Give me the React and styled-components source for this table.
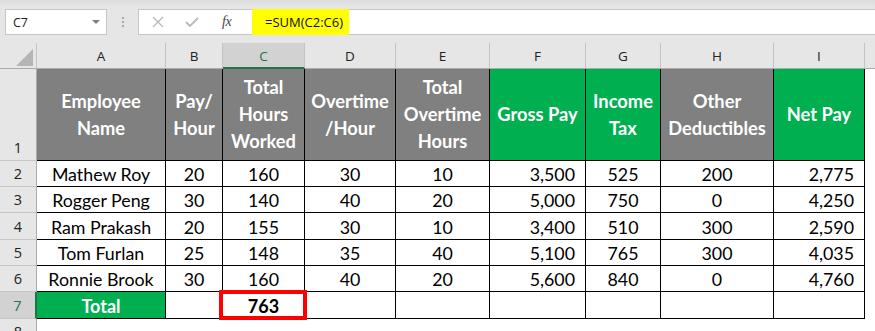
import React from 'react';
import styled, { createGlobalStyle } from 'styled-components';

const GlobalStyle = createGlobalStyle`
  html, body {
    margin: 0;
    padding: 0;
    background: #ffffff;
  }
  body {
    font-family: Lato, "Open Sans", sans-serif;
  }
`;

const Page = styled.div`
  width: 875px;
  height: 331px;
  overflow: hidden;
  background: #ffffff;
`;

const FormulaBar = styled.div`
  height: 43px;
  box-sizing: border-box;
  padding-top: 9px;
  display: flex;
  align-items: flex-start;
  background: linear-gradient(#dcdcdc, #e6e6e6 7px, #e6e6e6);
  font-family: "Open Sans", sans-serif;
`;

const NameBox = styled.div`
  margin-left: 5px;
  width: 102px;
  height: 26px;
  box-sizing: border-box;
  border: 1px solid #c6c6c6;
  background: #ffffff;
  display: flex;
  align-items: center;
  justify-content: space-between;
  padding: 0 6px 0 7px;
  font-size: 12.5px;
  color: #222;
`;

const DropArrow = styled.span`
  width: 0;
  height: 0;
  border-left: 4px solid transparent;
  border-right: 4px solid transparent;
  border-top: 4px solid #7f7f7f;
`;

const Grip = styled.div`
  width: 31px;
  height: 26px;
  display: flex;
  flex-direction: column;
  align-items: center;
  justify-content: center;
  gap: 2px;

  span {
    width: 2px;
    height: 2px;
    background: #a9a9a9;
  }
`;

const FxBox = styled.div`
  width: 114px;
  height: 26px;
  box-sizing: border-box;
  border: 1px solid #c6c6c6;
  border-right: none;
  background: #ffffff;
  display: flex;
  align-items: center;
  padding-left: 13px;
`;

const FxButton = styled.span`
  width: ${(p) => p.$w}px;
  display: flex;
  align-items: center;
`;

const FxLabel = styled.span`
  font-family: "Liberation Serif", serif;
  font-style: italic;
  font-size: 14px;
  color: #444;
  letter-spacing: -0.5px;
`;

const FormulaInput = styled.div`
  flex: 1;
  height: 26px;
  box-sizing: border-box;
  border-top: 1px solid #c6c6c6;
  border-bottom: 1px solid #c6c6c6;
  background: #ffffff;
  display: flex;
`;

const Highlight = styled.span`
  margin: -1px 0;
  width: 97px;
  box-sizing: border-box;
  padding-left: 13px;
  background: #ffff00;
  display: flex;
  align-items: center;
  font-size: 13px;
  color: #111;
`;

const Sheet = styled.div`
  display: grid;
  grid-template-columns: 37px 129px 57px 82px 91px 94px 96px 75px 113px 91px 1fr;
  grid-template-rows: 26px 92px 26px 26px 27px 26px 26px 27px 26px;
`;

const Corner = styled.div`
  background: #e6e6e6;
  border-bottom: 1px solid #ababab;
  border-right: 1px solid #c6c6c6;
  box-sizing: border-box;
  display: flex;
  align-items: flex-end;
  justify-content: flex-end;
  padding: 0 3px 2px 0;

  svg {
    display: block;
  }
`;

const ColHead = styled.div`
  box-sizing: border-box;
  background: ${(p) => (p.$active ? '#d2d2d2' : '#e6e6e6')};
  border-right: 1px solid #c3c3c3;
  border-bottom: ${(p) => (p.$active ? '2px solid #217346' : '1px solid #ababab')};
  display: flex;
  align-items: center;
  justify-content: center;
  padding-top: ${(p) => (p.$active ? '1px' : '0')};
  font-family: "Open Sans", sans-serif;
  font-size: 13.5px;
  color: ${(p) => (p.$active ? '#217346' : '#222')};
`;

const RowHead = styled.div`
  box-sizing: border-box;
  background: ${(p) => (p.$active ? '#d2d2d2' : '#e6e6e6')};
  border-right: ${(p) => (p.$active ? '2px solid #217346' : '1px solid #ababab')};
  border-bottom: 1px solid #c6c6c6;
  display: flex;
  align-items: ${(p) => (p.$bottom ? 'flex-end' : 'center')};
  justify-content: center;
  padding-bottom: ${(p) => (p.$bottom ? '3px' : '0')};
  font-family: "Open Sans", sans-serif;
  font-size: 14.5px;
  color: ${(p) => (p.$active ? '#217346' : '#222')};
`;

const TitleCell = styled.div`
  box-sizing: border-box;
  background: ${(p) => (p.$green ? '#00b050' : '#808080')};
  border-right: 1px solid #000;
  border-bottom: 1px solid #000;
  display: flex;
  align-items: center;
  justify-content: center;
  text-align: center;
  color: #ffffff;
  font-weight: 700;
  font-size: 18.3px;
  line-height: 27px;
  white-space: pre-line;
`;

const Cell = styled.div`
  position: relative;
  box-sizing: border-box;
  background: ${(p) => (p.$green ? '#00b050' : '#ffffff')};
  border-right: 1px solid #000;
  border-bottom: 1px solid #000;
  display: flex;
  align-items: center;
  justify-content: ${(p) => (p.$right ? 'flex-end' : 'center')};
  padding-right: ${(p) => (p.$right ? '10px' : '0')};
  padding-top: 1px;
  font-size: ${(p) => (p.$bold ? '18px' : '17.8px')};
  font-weight: ${(p) => (p.$bold ? 700 : 400)};
  color: ${(p) => (p.$green ? '#ffffff' : '#000')};

  ${(p) =>
    p.$marked &&
    `
    &::after {
      content: '';
      position: absolute;
      left: -4px;
      top: -2px;
      right: -3px;
      bottom: -2px;
      border: 4px solid #ff0000;
      z-index: 2;
    }
  `}
`;

const Filler = styled.div`
  background: ${(p) => (p.$head ? '#e6e6e6' : '#ffffff')};
  border-bottom: ${(p) => (p.$head ? '1px solid #ababab' : 'none')};
  box-sizing: border-box;
`;

const columns = ['A', 'B', 'C', 'D', 'E', 'F', 'G', 'H', 'I'];

const titles = [
  { text: 'Employee\nName' },
  { text: 'Pay/\nHour' },
  { text: 'Total\nHours\nWorked' },
  { text: 'Overtime\n/Hour' },
  { text: 'Total\nOvertime\nHours' },
  { text: 'Gross Pay', green: true },
  { text: 'Income\nTax', green: true },
  { text: 'Other\nDeductibles' },
  { text: 'Net Pay', green: true },
];

const rows = [
  ['Mathew Roy', 20, 160, 30, 10, '3,500', 525, 200, '2,775'],
  ['Rogger Peng', 30, 140, 40, 20, '5,000', 750, 0, '4,250'],
  ['Ram Prakash', 20, 155, 30, 10, '3,400', 510, 300, '2,590'],
  ['Tom Furlan', 25, 148, 35, 40, '5,100', 765, 300, '4,035'],
  ['Ronnie Brook', 30, 160, 40, 20, '5,600', 840, 0, '4,760'],
];

// columns F and I are right aligned in the sheet
const rightCols = [5, 8];

export default function App() {
  return (
    <Page>
      <GlobalStyle />
      <FormulaBar>
        <NameBox>
          <span>C7</span>
          <DropArrow />
        </NameBox>
        <Grip>
          <span />
          <span />
          <span />
        </Grip>
        <FxBox>
          <FxButton $w={33}>
            <svg width="12" height="12" viewBox="0 0 12 12">
              <path d="M1 1 L11 11 M11 1 L1 11" stroke="#b8b8b8" strokeWidth="1.3" fill="none" />
            </svg>
          </FxButton>
          <FxButton $w={37}>
            <svg width="14" height="10" viewBox="0 0 14 10">
              <path d="M1 5 L5 9 L13 1" stroke="#b8b8b8" strokeWidth="1.8" fill="none" />
            </svg>
          </FxButton>
          <FxLabel>fx</FxLabel>
        </FxBox>
        <FormulaInput>
          <Highlight>=SUM(C2:C6)</Highlight>
        </FormulaInput>
      </FormulaBar>

      <Sheet>
        <Corner>
          <svg width="17" height="17" viewBox="0 0 17 17">
            <polygon points="17,0 17,17 0,17" fill="#b5b5b5" />
          </svg>
        </Corner>
        {columns.map((c) => (
          <ColHead key={c} $active={c === 'C'}>
            {c}
          </ColHead>
        ))}
        <Filler $head />

        <RowHead $bottom>1</RowHead>
        {titles.map((t) => (
          <TitleCell key={t.text} $green={t.green}>
            {t.text}
          </TitleCell>
        ))}
        <Filler />

        {rows.map((r, i) => (
          <React.Fragment key={r[0]}>
            <RowHead>{i + 2}</RowHead>
            {r.map((v, j) => (
              <Cell key={j} $right={rightCols.includes(j)}>
                {v}
              </Cell>
            ))}
            <Filler />
          </React.Fragment>
        ))}

        <RowHead $active>7</RowHead>
        <Cell $green $bold>
          Total
        </Cell>
        <Cell />
        <Cell $bold $marked>
          763
        </Cell>
        <Cell />
        <Cell />
        <Cell />
        <Cell />
        <Cell />
        <Cell />
        <Filler />

        <RowHead>8</RowHead>
      </Sheet>
    </Page>
  );
}
